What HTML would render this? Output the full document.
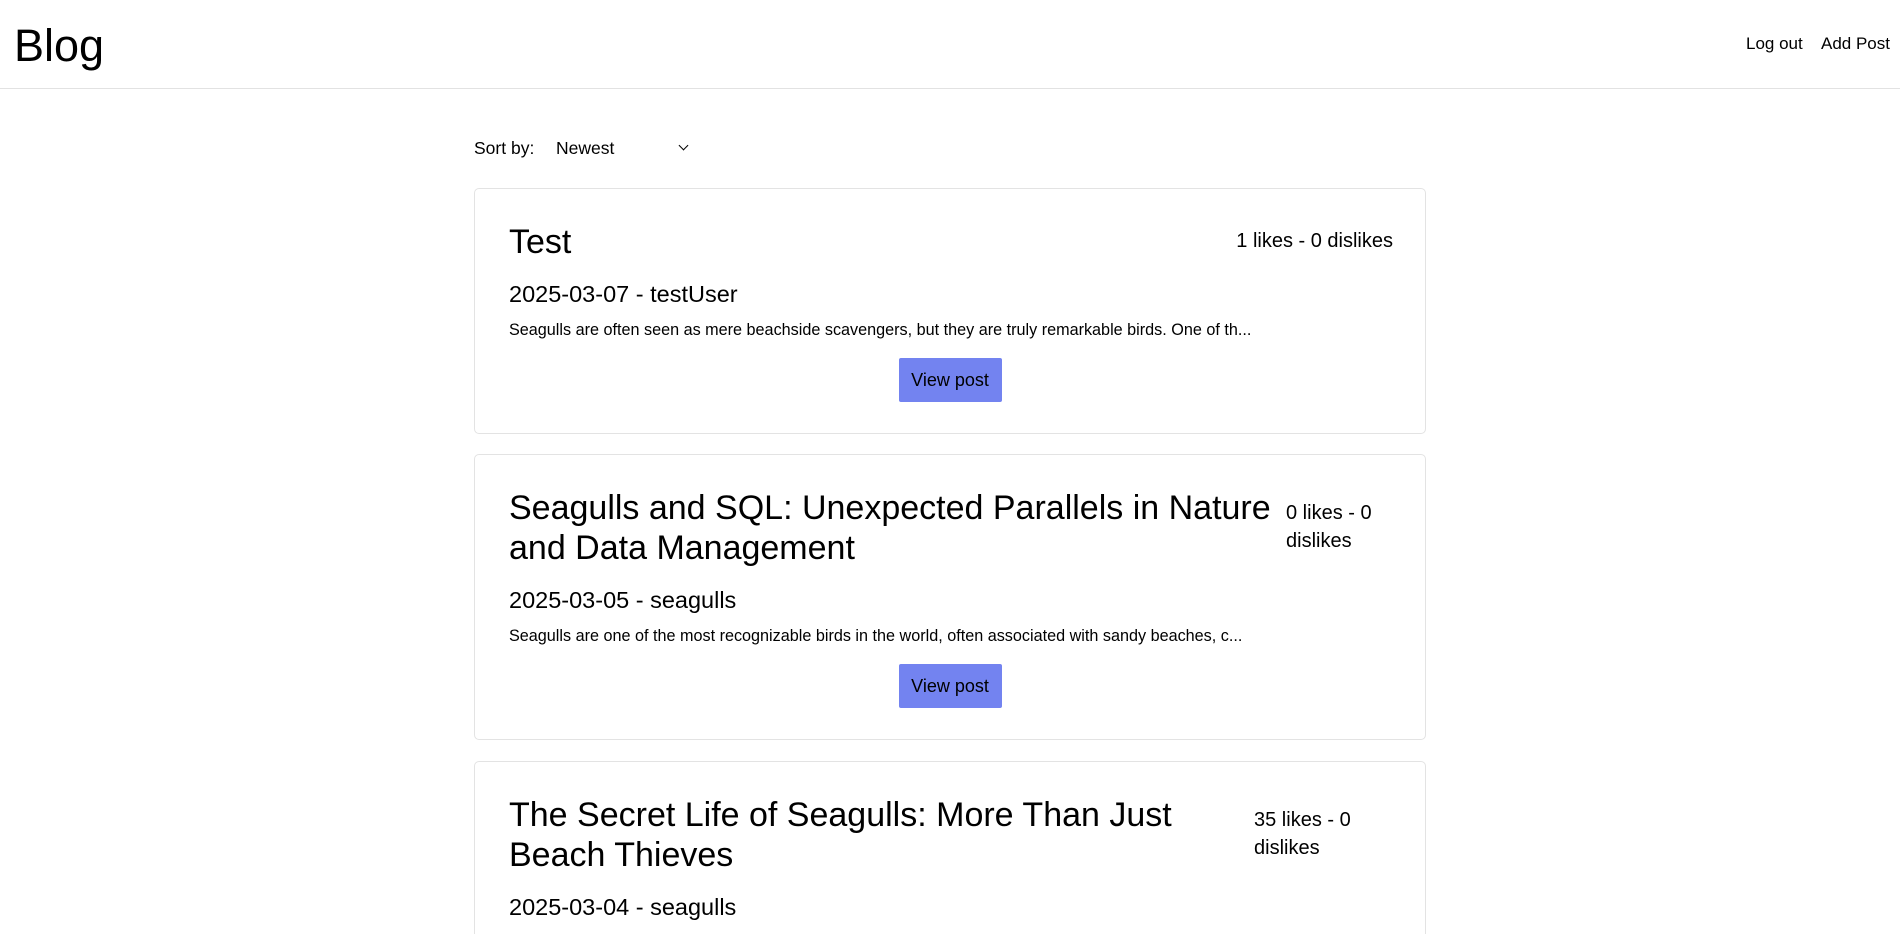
<!DOCTYPE html>
<html><head><meta charset="utf-8"><style>
*{box-sizing:border-box;margin:0;padding:0}
html,body{width:1900px;height:934px;overflow:hidden;background:#fff}
body{font-family:"Liberation Sans",Arial,sans-serif;color:#000}
.wrap{position:relative;width:1900px;height:934px;overflow:hidden}
.hdr{position:absolute;left:0;top:0;width:1900px;height:89px;border-bottom:1px solid #e2e2e2}
.logo{position:absolute;left:14px;top:20px;font-size:45px;line-height:52px}
.nav{position:absolute;top:34px;font-size:17px;line-height:20px}
.sort{position:absolute;left:474px;top:138px;font-size:17.5px;line-height:20px}
.sel{position:absolute;left:556px;top:138px;font-size:17.5px;line-height:20px}
.chev{position:absolute;left:680px;top:142px;width:7px;height:7px;border-right:1.8px solid #000;border-bottom:1.8px solid #000;transform:rotate(45deg)}
.card{position:absolute;left:474px;width:952px;border:1px solid #e3e3e3;border-radius:5px;padding:33px 34px}
.t{font-size:34px;line-height:40px;white-space:nowrap}
.lk{position:absolute;font-size:20px;line-height:28px}
.d{font-size:23.5px;line-height:28px;margin-top:18px}
.e{font-size:16.2px;line-height:20px;margin-top:12px;white-space:nowrap}
.b{display:block;margin:18px auto 0;width:103px;height:44px;background:#7383f0;border-radius:2px;font-size:18px;line-height:44px;text-align:center}
</style></head><body><div class="wrap">
<div class="hdr">
<div class="logo">Blog</div>
<div class="nav" style="left:1746px">Log out</div>
<div class="nav" style="left:1821px">Add Post</div>
</div>
<div class="sort">Sort by:</div>
<div class="sel">Newest</div>
<div class="chev"></div>

<div class="card" style="top:188px;height:246px">
<div class="t">Test</div>
<div class="lk" style="right:32px;top:38px;white-space:nowrap">1 likes - 0 dislikes</div>
<div class="d">2025-03-07 - testUser</div>
<div class="e">Seagulls are often seen as mere beachside scavengers, but they are truly remarkable birds. One of th...</div>
<div class="b">View post</div>
</div>

<div class="card" style="top:454px;height:286px">
<div class="t">Seagulls and SQL: Unexpected Parallels in Nature<br>and Data Management</div>
<div class="lk" style="left:811px;top:44px;width:112px">0 likes - 0 dislikes</div>
<div class="d">2025-03-05 - seagulls</div>
<div class="e">Seagulls are one of the most recognizable birds in the world, often associated with sandy beaches, c...</div>
<div class="b">View post</div>
</div>

<div class="card" style="top:761px;height:173px;border-bottom:none;border-radius:5px 5px 0 0">
<div class="t">The Secret Life of Seagulls: More Than Just<br>Beach Thieves</div>
<div class="lk" style="left:779px;top:44px;width:125px">35 likes - 0 dislikes</div>
<div class="d">2025-03-04 - seagulls</div>
</div>
</div></body></html>
